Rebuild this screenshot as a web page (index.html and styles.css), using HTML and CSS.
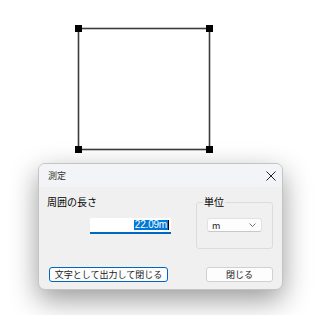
FILE: index.html
```html
<!DOCTYPE html>
<html lang="ja">
<head>
    <meta charset="UTF-8">
    <title>測定</title>
    <link rel="stylesheet" href="styles.css">
</head>
<body>
    <div class="canvas">
        <!-- 図形 -->
        <svg class="shape" width="330" height="315" viewBox="0 0 330 315">
            <rect x="78.5" y="28.5" width="131" height="121" fill="none" stroke="#3c3c3c" stroke-width="1.6"/>
            <rect x="75" y="25" width="7" height="7" fill="#000"/>
            <rect x="206" y="25" width="7" height="7" fill="#000"/>
            <rect x="75" y="146" width="7" height="7" fill="#000"/>
            <rect x="206" y="146" width="7" height="7" fill="#000"/>
        </svg>

        <!-- ダイアログ -->
        <div class="dialog">
            <div class="title-bar">
                <span class="title">測定</span>
                <svg class="close" width="10" height="10" viewBox="0 0 10 10">
                    <path d="M0.5 0.5 L9.5 9.5 M9.5 0.5 L0.5 9.5" stroke="#222" stroke-width="1"/>
                </svg>
            </div>
            <div class="content">
                <div class="measure">
                    <div class="label">周囲の長さ</div>
                    <div class="value-box">
                        <span class="selected">22.09m</span><span class="caret"></span>
                    </div>
                </div>
                <fieldset class="unit-group">
                    <legend>単位</legend>
                    <div class="select">
                        <span>m</span>
                        <svg width="7" height="4" viewBox="0 0 7 4">
                            <path d="M0.5 0.5 L3.5 3.5 L6.5 0.5" fill="none" stroke="#666" stroke-width="0.9"/>
                        </svg>
                    </div>
                </fieldset>
            </div>
            <div class="footer">
                <button type="button" class="btn btn-default">文字として出力して閉じる</button>
                <button type="button" class="btn btn-close">閉じる</button>
            </div>
        </div>
    </div>
</body>
</html>
```

FILE: styles.css
```css
body {
    margin: 0;
    background-color: #fff;
    font-family: "Noto Sans CJK JP", "Noto Sans", sans-serif;
    color: #1b1b1b;
}

.canvas {
    position: relative;
    width: 330px;
    height: 315px;
    overflow: hidden;
}

.shape {
    display: block;
}

.dialog {
    position: absolute;
    left: 38px;
    top: 163px;
    width: 245px;
    height: 127px;
    box-sizing: border-box;
    display: flex;
    flex-direction: column;
    background-color: #f0f0f0;
    border: 1px solid #c4c4c4;
    border-radius: 7px;
    box-shadow: 0 10px 28px rgba(0, 0, 0, 0.4);
    overflow: hidden;
}

.title-bar {
    height: 23px;
    display: flex;
    align-items: center;
    justify-content: space-between;
    padding: 0 6px 0 9px;
    background-color: #f3f4f8;
}

.title {
    font-size: 9px;
    color: #333;
}

.close {
    display: block;
}

.content {
    display: flex;
    padding: 9px 9px 0 8px;
}

.measure {
    width: 124px;
    display: flex;
    flex-direction: column;
}

.label {
    font-size: 10px;
    line-height: 12px;
    color: #000;
}

.value-box {
    margin-top: 10px;
    margin-left: auto;
    width: 81px;
    height: 16px;
    background-color: #fff;
    border-bottom: 2px solid #0067c0;
    display: flex;
    align-items: center;
    justify-content: flex-end;
    padding-right: 2px;
    box-sizing: border-box;
    font-family: "Liberation Sans", sans-serif;
    font-size: 10px;
}

.selected {
    background-color: #0078d7;
    color: #fff;
    line-height: 10px;
    padding: 0 1px;
    letter-spacing: -0.2px;
}

.caret {
    width: 1px;
    height: 10px;
    background-color: #000;
}

.unit-group {
    margin: 0 0 0 auto;
    width: 77px;
    box-sizing: border-box;
    padding: 10px 10px 16px;
    border: 1px solid #dcdcdc;
    border-radius: 3px;
    min-inline-size: 0;
}

.unit-group legend {
    font-size: 10px;
    line-height: 12px;
    padding: 0 1px;
    margin-left: -4px;
    color: #000;
}

.select {
    height: 14px;
    box-sizing: border-box;
    display: flex;
    align-items: center;
    justify-content: space-between;
    padding: 0 5px 0 4px;
    background-color: #fdfdfd;
    border: 1px solid #e2e2e2;
    border-bottom-color: #c8c8c8;
    border-radius: 3px;
    font-size: 9px;
}

.select svg {
    display: block;
}

.footer {
    margin-top: auto;
    display: flex;
    justify-content: space-between;
    padding: 0 9px 7px 10px;
}

.btn {
    height: 15px;
    box-sizing: border-box;
    padding: 0;
    font-family: inherit;
    font-size: 9px;
    line-height: 13px;
    color: #1b1b1b;
    background-color: #fdfdfd;
    border: 1px solid #d0d0d0;
    border-radius: 3px;
}

.btn-default {
    width: 119px;
    border-color: #0067c0;
}

.btn-close {
    width: 67px;
}
```
